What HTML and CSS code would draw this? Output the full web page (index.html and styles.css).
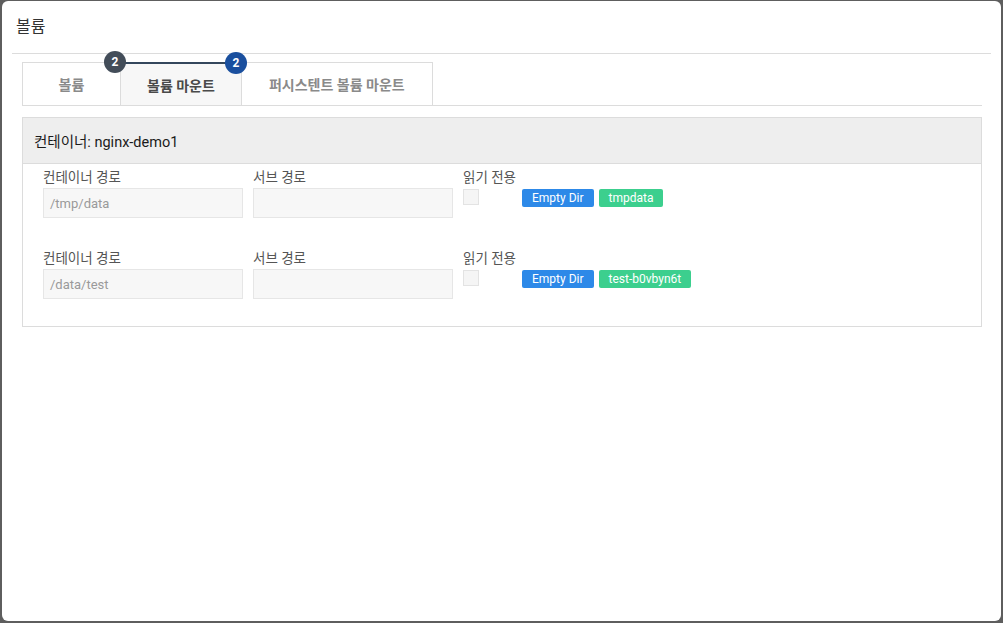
FILE: index.html
```html
<!DOCTYPE html>
<html lang="ko">
<head>
<meta charset="utf-8">
<title>볼륨</title>
<link rel="stylesheet" href="styles.css">
</head>
<body>
<div class="modal">
  <div class="modal-header">
    <h1 class="modal-title">볼륨</h1>
  </div>
  <div class="modal-body">
    <div class="tabs">
      <div class="tab">볼륨<span class="count count-dark">2</span></div>
      <div class="tab tab-active">볼륨 마운트<span class="count count-blue">2</span></div>
      <div class="tab tab-wide">퍼시스텐트 볼륨 마운트</div>
    </div>
    <div class="panel">
      <div class="panel-header">컨테이너: nginx-demo1</div>
      <div class="mount">
        <div class="field">
          <div class="label">컨테이너 경로</div>
          <div class="input">/tmp/data</div>
        </div>
        <div class="field">
          <div class="label">서브 경로</div>
          <div class="input"></div>
        </div>
        <div class="field-ro">
          <div class="label">읽기 전용</div>
          <div class="ro-line">
            <span class="checkbox"></span>
            <span class="tag tag-blue">Empty Dir</span>
            <span class="tag tag-green">tmpdata</span>
          </div>
        </div>
      </div>
      <div class="mount">
        <div class="field">
          <div class="label">컨테이너 경로</div>
          <div class="input">/data/test</div>
        </div>
        <div class="field">
          <div class="label">서브 경로</div>
          <div class="input"></div>
        </div>
        <div class="field-ro">
          <div class="label">읽기 전용</div>
          <div class="ro-line">
            <span class="checkbox"></span>
            <span class="tag tag-blue">Empty Dir</span>
            <span class="tag tag-green">test-b0vbyn6t</span>
          </div>
        </div>
      </div>
    </div>
  </div>
</div>
</body>
</html>
```
FILE: styles.css
```css
* { box-sizing: border-box; }
html, body { margin: 0; padding: 0; }
body {
  background: #5e5e5e;
  font-family: Roboto, "Noto Sans CJK KR", sans-serif;
  width: 1003px;
  height: 623px;
  overflow: hidden;
  padding: 1px 2px 2px 2px;
}
.modal {
  height: 620px;
  background: #ffffff;
  border-radius: 6px;
}
.modal-header {
  margin: 0 10px;
  height: 53px;
  border-bottom: 1px solid #dcdcdc;
  display: flex;
  align-items: center;
  padding-left: 4px;
}
.modal-title {
  margin: 0;
  font-size: 16px;
  font-weight: 400;
  color: #333;
  line-height: 20px;
}
.modal-body {
  padding: 8px 19px 0 20px;
}
.tabs {
  display: flex;
  border-bottom: 1px solid #dcdcdc;
}
.tab {
  position: relative;
  min-width: 99px;
  height: 43px;
  padding: 0 26px;
  display: flex;
  align-items: center;
  justify-content: center;
  border: 1px solid #dcdcdc;
  border-bottom: none;
  margin-right: -1px;
  font-size: 14px;
  font-weight: 700;
  color: #8a8a8a;
  background: #fff;
}
.tab-wide { padding: 0 27px; }
.tab-active {
  background: #f7f7f7;
  color: #4a4a4a;
  border-top: 2px solid #34475c;
  z-index: 1;
}
.count {
  position: absolute;
  top: -12px;
  right: -6px;
  width: 22px;
  height: 22px;
  border-radius: 50%;
  color: #fff;
  font-size: 12px;
  font-weight: 700;
  display: flex;
  align-items: center;
  justify-content: center;
  z-index: 2;
}
.count-dark { background: #434d59; }
.count-blue { background: #1a4f9e; }
.panel {
  margin-top: 11px;
  border: 1px solid #dcdcdc;
  padding-bottom: 27px;
}
.panel-header {
  height: 46px;
  background: #eeeeee;
  border-bottom: 1px solid #dcdcdc;
  display: flex;
  align-items: center;
  padding-left: 11px;
  font-size: 14.5px;
  font-weight: 400;
  color: #1a1a1a;
}
.mount {
  display: flex;
  gap: 10px;
  padding: 3px 20px 0 20px;
}
.mount + .mount { margin-top: 27px; }
.field { width: 200px; }
.label {
  font-size: 13.5px;
  line-height: 20px;
  color: #555;
  margin-bottom: 1px;
}
.input {
  height: 30px;
  background: #f7f7f7;
  border: 1px solid #e6e6e6;
  font-size: 13px;
  color: #9a9a9a;
  padding-left: 6px;
  display: flex;
  align-items: center;
}
.ro-line {
  display: flex;
  align-items: flex-start;
  padding-top: 1px;
}
.checkbox {
  width: 16px;
  height: 16px;
  background: #f5f5f5;
  border: 1px solid #e3e3e3;
  margin-right: 43px;
}
.tag {
  height: 18px;
  line-height: 18px;
  padding: 0 10px;
  border-radius: 2px;
  color: #fff;
  font-size: 12px;
  margin-right: 5px;
}
.tag-blue { background: #2d89e8; }
.tag-green { background: #3ccf8e; }
```
